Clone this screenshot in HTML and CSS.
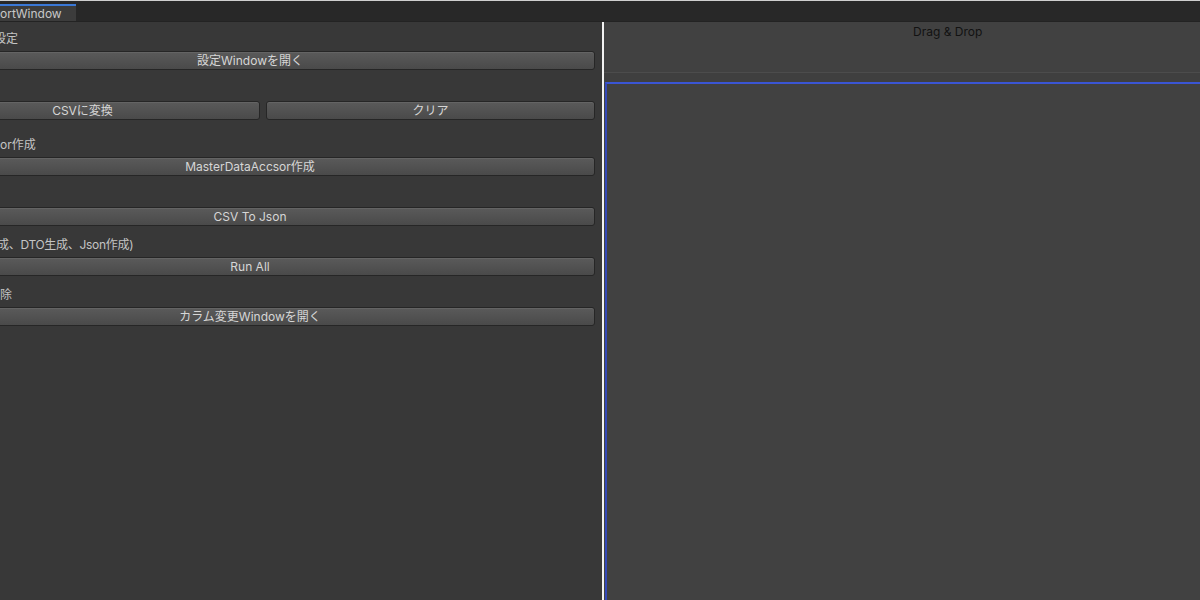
FILE: index.html
```html
<!DOCTYPE html>
<html lang="ja">
<head>
<meta charset="utf-8">
<title>ImportWindow</title>
<link rel="stylesheet" href="styles.css">
</head>
<body>
<div class="topline"></div>
<div class="tabbar">
  <div class="tab">ortWindow</div>
</div>
<div class="main">
  <div class="left">
    <div class="inner">
      <div class="group">
        <div class="label label-cut">設定</div>
        <button class="btn">設定Windowを開く</button>
      </div>
      <div class="group group-row">
        <div class="label"></div>
        <div class="btnrow">
          <button class="btn btn-a">CSVに変換</button>
          <button class="btn btn-b">クリア</button>
        </div>
      </div>
      <div class="group">
        <div class="label">or作成</div>
        <button class="btn">MasterDataAccsor作成</button>
      </div>
      <div class="group">
        <div class="label"></div>
        <button class="btn">CSV To Json</button>
      </div>
      <div class="group">
        <div class="label label-narrow">成、DTO生成、Json作成)</div>
        <button class="btn">Run All</button>
      </div>
      <div class="group">
        <div class="label">除</div>
        <button class="btn">カラム変更Windowを開く</button>
      </div>
    </div>
  </div>
  <div class="divider"></div>
  <div class="right">
    <div class="dd-header">Drag &amp; Drop</div>
    <div class="dd-sep"></div>
    <div class="dd-gap"></div>
    <div class="dd-box"></div>
  </div>
</div>
</body>
</html>
```
FILE: styles.css
```css
html, body {
  margin: 0;
  padding: 0;
  width: 1200px;
  height: 600px;
  overflow: hidden;
  background: #383838;
  font-family: Inter, "Noto Sans CJK JP", sans-serif;
  font-size: 12px;
}

.topline {
  height: 1px;
  background: #cfcfcf;
}

.tabbar {
  height: 20px;
  background: #282828;
  border-bottom: 1px solid #232323;
  display: flex;
  align-items: flex-end;
}

.tab {
  width: 76px;
  height: 17px;
  box-sizing: border-box;
  background: #3c3c3c;
  border-top: 2px solid #3a78d6;
  color: #c8c8c8;
  font-size: 12px;
  line-height: 15px;
  white-space: nowrap;
  overflow: hidden;
}

.main {
  display: flex;
  height: 578px;
}

.left {
  width: 602px;
  background: #383838;
  overflow: hidden;
  flex: none;
}

.inner {
  width: 690px;
  margin-left: -95px;
  padding-top: 8px;
}

.group {
  display: flex;
  flex-direction: column;
  margin-bottom: 10px;
}

.group-row {
  margin-bottom: 16px;
}

.label {
  height: 18px;
  line-height: 18px;
  margin-bottom: 3px;
  color: #c4c4c4;
  font-size: 12px;
  padding-left: 95px;
  white-space: nowrap;
}

.label-cut {
  padding-left: 89px;
}

.label-narrow {
  padding-left: 92px;
  letter-spacing: -0.3px;
}

.btn {
  height: 19px;
  box-sizing: border-box;
  margin: 0;
  padding: 0;
  border: 1px solid #262626;
  border-radius: 3px;
  background: linear-gradient(#5a5a5a, #4a4a4a);
  box-shadow: inset 0 1px 0 #646464;
  color: #d6d6d6;
  font-family: Inter, "Noto Sans CJK JP", sans-serif;
  font-size: 12px;
  line-height: 16px;
  text-align: center;
  white-space: nowrap;
}

.btnrow {
  display: flex;
  gap: 6px;
}

.btn-a {
  width: 355px;
}

.btn-b {
  flex: 1;
}

.divider {
  width: 2px;
  background: #f2f2f2;
  flex: none;
}

.right {
  flex: 1;
  background: #414141;
  display: flex;
  flex-direction: column;
}

.dd-header {
  height: 50px;
  box-sizing: border-box;
  padding-left: 309px;
  padding-top: 3px;
  color: #121212;
  font-size: 12px;
  line-height: 14px;
}

.dd-sep {
  height: 1px;
  background: #4c4c4c;
}

.dd-gap {
  height: 9px;
  background: #3f3f3f;
}

.dd-box {
  flex: 1;
  margin-left: 1px;
  margin-right: -10px;
  border-top: 2px solid #3a55d4;
  border-left: 2px solid #3348b8;
  background: #414141;
}
```
